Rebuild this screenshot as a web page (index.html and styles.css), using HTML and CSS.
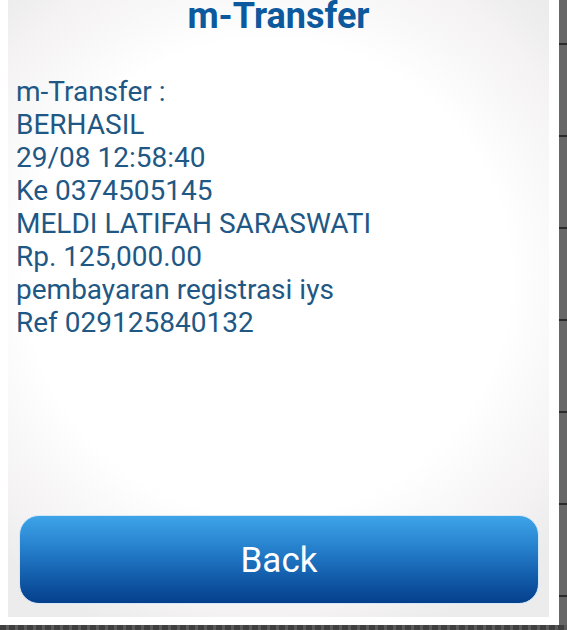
FILE: index.html
```html
<!DOCTYPE html>
<html>
<head>
<meta charset="utf-8">
<link rel="stylesheet" href="styles.css">
</head>
<body>
<div class="screen">
  <div class="row">
    <div class="card">
      <h1 class="title">m-Transfer</h1>
      <div class="message">
        <div class="line">m-Transfer :</div>
        <div class="line">BERHASIL</div>
        <div class="line">29/08 12:58:40</div>
        <div class="line">Ke 0374505145</div>
        <div class="line">MELDI LATIFAH SARASWATI</div>
        <div class="line">Rp. 125,000.00</div>
        <div class="line">pembayaran registrasi iys</div>
        <div class="line">Ref 029125840132</div>
      </div>
      <div class="actions">
        <button class="back">Back</button>
      </div>
    </div>
    <div class="side"></div>
  </div>
  <div class="footer"></div>
</div>
</body>
</html>
```

FILE: styles.css
```css
html, body {
  margin: 0;
  padding: 0;
  background: #ffffff;
}
body {
  width: 567px;
  height: 630px;
  overflow: hidden;
  font-family: Roboto, "Noto Sans", sans-serif;
}
.screen {
  display: flex;
  flex-direction: column;
  height: 630px;
}
.row {
  display: flex;
  height: 625px;
}
.card {
  width: 541px;
  height: 617px;
  margin-left: 8px;
  background: radial-gradient(ellipse 72% 62% at 48% 45%, #ffffff 62%, #f4f2f2 88%, #ececec 100%);
  display: flex;
  flex-direction: column;
}
.title {
  margin: 0;
  text-align: center;
  font-size: 36px;
  font-weight: 700;
  color: #0c599d;
  line-height: 32px;
}
.message {
  margin-top: 43px;
  padding-left: 8px;
  color: #1f5884;
  font-size: 28px;
  line-height: 33px;
  flex: 1;
}
.actions {
  padding: 0 10px 13px 11px;
}
.back {
  display: block;
  width: 100%;
  height: 89px;
  border-radius: 20px;
  border: 1px solid #d4e8f8;
  background: linear-gradient(to bottom, #3ea4e8 0%, #2782ce 35%, #1562b0 65%, #053f8c 100%);
  color: #ffffff;
  font-family: Roboto, "Noto Sans", sans-serif;
  font-size: 35px;
  padding: 2px 0 0 0;
}
.side {
  width: 8px;
  margin-left: auto;
  height: 630px;
  background: repeating-linear-gradient(to bottom, #676767 0 43px, #2a2a2a 43px 45px, #676767 45px 92px);
}
.footer {
  height: 5px;
  background: repeating-linear-gradient(to right, #3f3f3f 0 6px, #5a5a5a 6px 9px);
}
```
